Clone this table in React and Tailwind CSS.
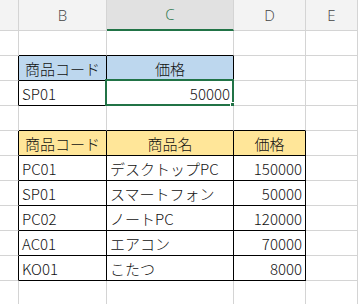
import React from "react";

const rows = [
  [null, null, null, null],
  [{ t: "商品コード", a: "c", bg: "b" }, { t: "価格", a: "c", bg: "b" }, null, null],
  [{ t: "SP01", a: "l" }, { t: "50000", a: "r", sel: true }, null, null],
  [null, null, null, null],
  [{ t: "商品コード", a: "c", bg: "y" }, { t: "商品名", a: "c", bg: "y" }, { t: "価格", a: "c", bg: "y" }, null],
  [{ t: "PC01", a: "l" }, { t: "デスクトップPC", a: "l" }, { t: "150000", a: "r" }, null],
  [{ t: "SP01", a: "l" }, { t: "スマートフォン", a: "l" }, { t: "50000", a: "r" }, null],
  [{ t: "PC02", a: "l" }, { t: "ノートPC", a: "l" }, { t: "120000", a: "r" }, null],
  [{ t: "AC01", a: "l" }, { t: "エアコン", a: "l" }, { t: "70000", a: "r" }, null],
  [{ t: "KO01", a: "l" }, { t: "こたつ", a: "l" }, { t: "8000", a: "r" }, null],
  [null, null, null, null],
];

function inTable(r, c) {
  return (r >= 2 && r <= 3 && c >= 1 && c <= 2) || (r >= 5 && r <= 10 && c >= 1 && c <= 3);
}

const headers = [
  { t: "", sel: false },
  { t: "B", sel: false },
  { t: "C", sel: true },
  { t: "D", sel: false },
  { t: "E", sel: false },
];

export default function App() {
  const cells = [];
  headers.forEach((h, c) => {
    cells.push(
      <div
        key={"h" + c}
        className={
          "flex items-center justify-center border-r border-r-[#d4d4d4] " +
          (h.sel
            ? "bg-[#e1e1e1] text-[#217346] border-b-2 border-b-[#217346]"
            : "bg-[#f3f3f3] text-[#444444] border-b border-b-[#d4d4d4]")
        }
        style={{ fontFamily: "'Open Sans', sans-serif" }}
      >
        <span className="text-[15px] font-light leading-none">{h.t}</span>
      </div>
    );
  });
  for (let r = 1; r <= 11; r++) {
    for (let c = 0; c <= 4; c++) {
      const d = c >= 1 && c <= 4 ? rows[r - 1][c - 1] : null;
      const rb = inTable(r, c) || inTable(r, c + 1);
      const bb = inTable(r, c) || inTable(r + 1, c);
      const bg = d && d.bg === "b" ? "bg-[#bdd7ee]" : d && d.bg === "y" ? "bg-[#ffe699]" : "bg-white";
      const align =
        d && d.a === "c" ? "justify-center" : d && d.a === "r" ? "justify-end pr-[3px]" : "justify-start pl-[3px]";
      cells.push(
        <div
          key={r + "-" + c}
          className={
            "relative flex items-center border-r border-b " +
            (rb ? "border-r-black " : "border-r-[#d4d4d4] ") +
            (bb ? "border-b-black " : "border-b-[#d4d4d4] ") +
            bg +
            " " +
            align
          }
        >
          {d && <span className="text-[15px] font-light leading-none text-[#111111] whitespace-nowrap">{d.t}</span>}
          {d && d.sel && (
            <>
              <div className="absolute left-[-2px] top-[-2px] right-[-1px] bottom-[-1px] border-2 border-[#217346]" />
              <div className="absolute right-[-4px] bottom-[-4px] w-[7px] h-[7px] bg-[#217346] border border-white" />
            </>
          )}
        </div>
      );
    }
  }
  return (
    <div
      className="w-[358px] h-[304px] overflow-hidden bg-white"
      style={{ fontFamily: "'Noto Sans CJK JP', sans-serif" }}
    >
      <div className="grid grid-cols-[19px_88px_127px_72px_52px] grid-rows-[31px_repeat(11,25px)]">{cells}</div>
    </div>
  );
}
